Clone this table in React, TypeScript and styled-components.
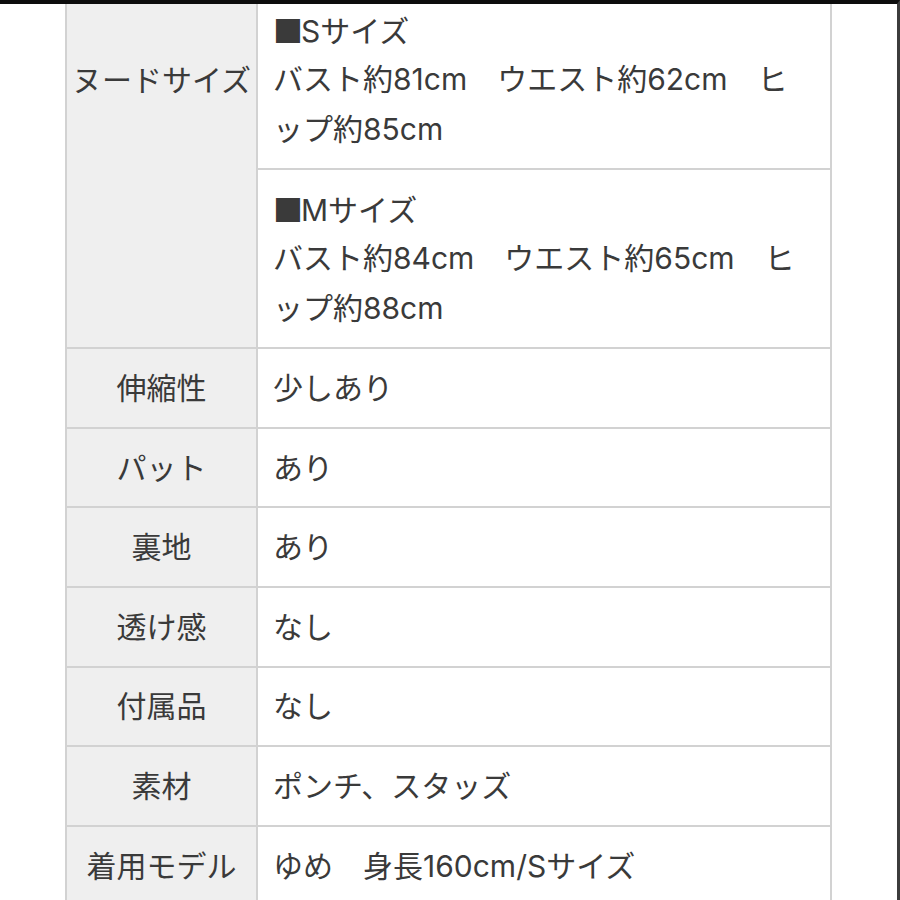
import React from "react";
import styled, { createGlobalStyle } from "styled-components";

const Global = createGlobalStyle`
  html, body { margin: 0; padding: 0; background: #fff; }
  body {
    font-family: "Inter", "Noto Sans CJK JP", sans-serif;
    color: #3a3a3a;
  }
`;

const Frame = styled.div`
  box-sizing: border-box;
  width: 900px;
  height: 900px;
  border-top: 4px solid #0d0d0d;
  border-right: 3px solid #3c3c3c;
  overflow: hidden;
  background: #fff;
`;

const Table = styled.div`
  margin: -14px 0 0 65px;
  width: 767px;
  box-sizing: border-box;
  border-left: 2px solid #d2d2d2;
  border-right: 2px solid #d2d2d2;
  font-size: 30px;
  line-height: 50px;
`;

const Row = styled.div`
  display: grid;
  grid-template-columns: 191px 572px;
  border-bottom: 2px solid #d2d2d2;
`;

const Label = styled.div<{ $top?: boolean }>`
  box-sizing: border-box;
  background: #efefef;
  border-right: 2px solid #d2d2d2;
  display: flex;
  justify-content: center;
  align-items: ${(p) => (p.$top ? "flex-start" : "center")};
  padding: ${(p) => (p.$top ? "65px 0 0" : "0")};
  white-space: nowrap;
`;

const LabelText = styled.div`
  height: 50px;
`;

const Values = styled.div`
  display: flex;
  flex-direction: column;
`;

const Value = styled.div<{ $divider?: boolean }>`
  box-sizing: border-box;
  padding: 13.8px 14px 13.8px 15px;
  border-bottom: ${(p) => (p.$divider ? "2px solid #d2d2d2" : "none")};
`;

const Line = styled.div`
  height: 50px;
  white-space: nowrap;
`;

const Mark = styled.span`
  font-family: "Noto Sans CJK JP", sans-serif;
  margin-right: -2px;
`;

type Item = { label: string; value: string };

const items: Item[] = [
  { label: "伸縮性", value: "少しあり" },
  { label: "パット", value: "あり" },
  { label: "裏地", value: "あり" },
  { label: "透け感", value: "なし" },
  { label: "付属品", value: "なし" },
  { label: "素材", value: "ポンチ、スタッズ" },
  { label: "着用モデル", value: "ゆめ　身長160cm/Sサイズ" },
];

const sizes = [
  { name: "Sサイズ", a: "バスト約81cm　ウエスト約62cm　ヒ", b: "ップ約85cm" },
  { name: "Mサイズ", a: "バスト約84cm　ウエスト約65cm　ヒ", b: "ップ約88cm" },
];

export default function App() {
  return (
    <>
      <Global />
      <Frame>
        <Table>
          <Row>
            <Label $top>
              <LabelText>ヌードサイズ</LabelText>
            </Label>
            <Values>
              {sizes.map((s, i) => (
                <Value key={s.name} $divider={i < sizes.length - 1}>
                  <Line>
                    <Mark>■</Mark>
                    {s.name}
                  </Line>
                  <Line>{s.a}</Line>
                  <Line>{s.b}</Line>
                </Value>
              ))}
            </Values>
          </Row>
          {items.map((it) => (
            <Row key={it.label}>
              <Label>
                <LabelText>{it.label}</LabelText>
              </Label>
              <Values>
                <Value>
                  <Line>{it.value}</Line>
                </Value>
              </Values>
            </Row>
          ))}
        </Table>
      </Frame>
    </>
  );
}
